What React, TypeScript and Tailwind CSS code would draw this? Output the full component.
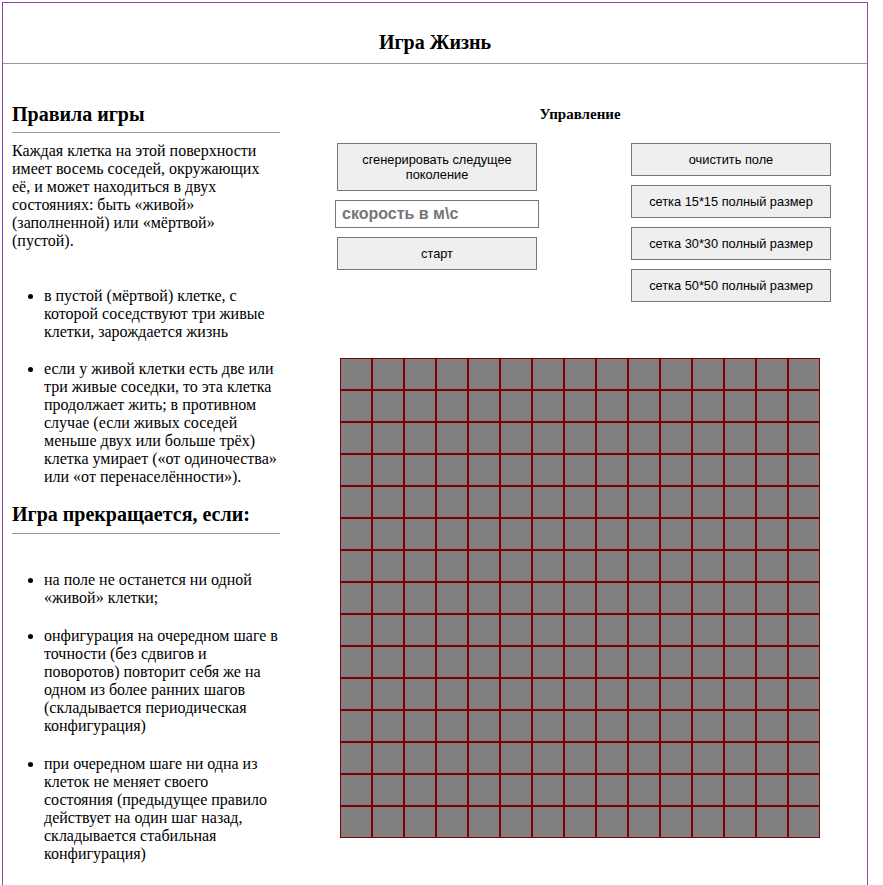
import React from "react";

const rulesLife = [
  "в пустой (мёртвой) клетке, с которой соседствуют три живые клетки, зарождается жизнь",
  "если у живой клетки есть две или три живые соседки, то эта клетка продолжает жить; в противном случае (если живых соседей меньше двух или больше трёх) клетка умирает («от одиночества» или «от перенаселённости»).",
];

const rulesEnd = [
  "на поле не останется ни одной «живой» клетки;",
  "онфигурация на очередном шаге в точности (без сдвигов и поворотов) повторит себя же на одном из более ранних шагов (складывается периодическая конфигурация)",
  "при очередном шаге ни одна из клеток не меняет своего состояния (предыдущее правило действует на один шаг назад, складывается стабильная конфигурация)",
];

const SIZE = 15;

const Btn = ({ children }: { children: React.ReactNode }) => (
  <button className="w-[200px] border border-[#767676] bg-[#efefef] px-[6px] py-2 font-['Liberation_Sans',Arial,sans-serif] text-[12.8px] leading-[15px] text-black">
    {children}
  </button>
);

const RuleList = ({ items, gap }: { items: string[]; gap: string }) => (
  <ul className={`flex list-disc flex-col pl-[32px] ${gap}`}>
    {items.map((text, i) => (
      <li key={i}>{text}</li>
    ))}
  </ul>
);

export default function App() {
  const cells = Array.from({ length: SIZE * SIZE });

  return (
    <div className="min-h-screen bg-white font-['Liberation_Serif','Times_New_Roman',serif] text-black">
      <div className="ml-[2px] mt-[2px] w-[866px] border-x border-t border-[#8e44ad] pb-6">
        <header className="h-[61px] border-b border-[#999] pt-[28px] text-center">
          <h1 className="text-[20px] font-bold leading-[22px]">Игра Жизнь</h1>
        </header>

        <main className="flex items-start">
          <section className="ml-[9px] w-[268px] text-[16px] leading-[18px]">
            <h2 className="mt-[39px] border-b border-[#999] pb-[7px] text-[20px] font-bold leading-[22px]">
              Правила игры
            </h2>
            <p className="mt-[9px]">
              Каждая клетка на этой поверхности имеет восемь соседей, окружающих
              её, и может находиться в двух состояниях: быть «живой»
              (заполненной) или «мёртвой» (пустой).
            </p>
            <div className="mt-[37px]">
              <RuleList items={rulesLife} gap="gap-[19px]" />
            </div>
            <h2 className="mt-[17px] border-b border-[#999] pb-[8px] text-[20px] font-bold leading-[22px]">
              Игра прекращается, если:
            </h2>
            <div className="mt-[37px]">
              <RuleList items={rulesEnd} gap="gap-[20px]" />
            </div>
          </section>

          <section className="ml-[13px] flex flex-1 flex-col items-center">
            <h3 className="mt-[42px] text-[15px] font-bold leading-[17px]">Управление</h3>

            <div className="ml-[6px] mt-[20px] flex w-[496px] items-start justify-between">
              <div className="flex w-[204px] flex-col items-center gap-[9px]">
                <Btn>
                  сгенерировать следущее
                  <br />
                  поколение
                </Btn>
                <input
                  placeholder="скорость в м\с"
                  className="h-[28px] w-[204px] border border-[#767676] px-[6px] font-['Liberation_Sans',Arial,sans-serif] text-[16px] font-bold placeholder:text-[#757575]"
                />
                <Btn>старт</Btn>
              </div>
              <div className="flex w-[200px] flex-col gap-[9px]">
                <Btn>очистить поле</Btn>
                <Btn>сетка 15*15 полный размер</Btn>
                <Btn>сетка 30*30 полный размер</Btn>
                <Btn>сетка 50*50 полный размер</Btn>
              </div>
            </div>

            <div className="mt-[56px] grid w-[480px] grid-cols-[repeat(15,32px)]">
              {cells.map((_, i) => (
                <div key={i} className="h-[32px] w-[32px] border border-[#800000] bg-[#808080]" />
              ))}
            </div>
          </section>
        </main>
      </div>
    </div>
  );
}
